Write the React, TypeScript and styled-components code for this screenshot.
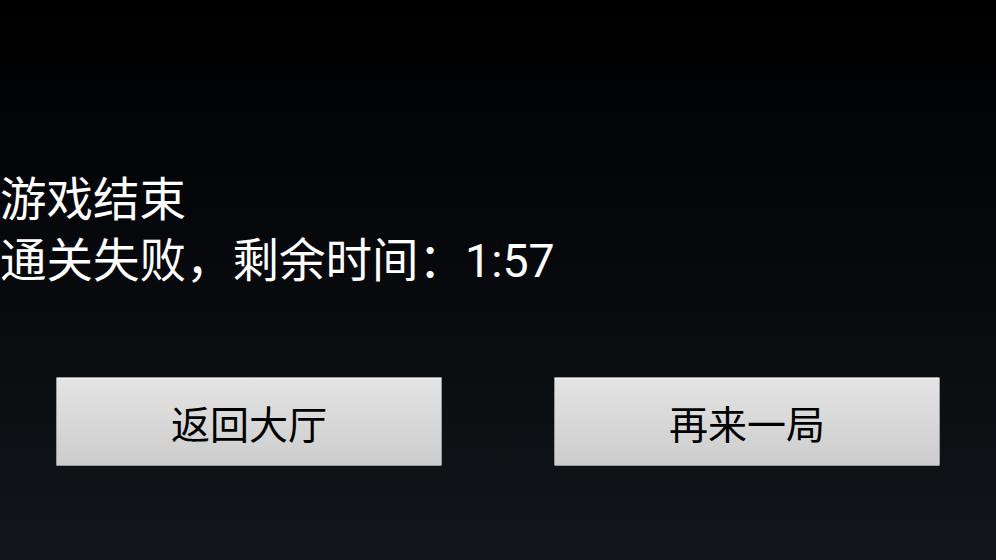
import React from 'react';
import styled, { createGlobalStyle } from 'styled-components';

const GlobalStyle = createGlobalStyle`
  html, body {
    margin : 0;
    padding: 0;
  }
  body {
    font-family: Roboto, 'Noto Sans CJK SC', sans-serif;
  }
`;

const Screen = styled.main`
  width         : 996px;
  height        : 560px;
  background    : linear-gradient(to bottom, #000000 0%, #05070a 40%, #12161a 100%);
  display       : flex;
  flex-direction: column;
  padding-top   : 170px;
  box-sizing    : border-box;
  overflow      : hidden;
`;

const Message = styled.section`
  display       : flex;
  flex-direction: column;
  color         : #ffffff;
  font-size     : 46.5px;
  line-height   : 61px;
`;

const Line = styled.div`
  white-space: nowrap;
`;

const ButtonRow = styled.div`
  display    : flex;
  gap        : 112px;
  margin-top : 85px;
  padding    : 0 56px;
`;

const Button = styled.button`
  width          : 386px;
  height         : 89px;
  padding        : 0;
  border         : 1px solid #9a9a9a;
  border-radius  : 1px;
  background     : linear-gradient(to bottom, #e4e4e4 0%, #d8d8d8 50%, #cdcdcd 100%);
  box-shadow     : inset 0 1px 0 #f0f0f0;
  color          : #000000;
  font-family    : 'Noto Sans CJK SC', sans-serif;
  font-size      : 39px;
  display        : flex;
  align-items    : center;
  justify-content: center;
  cursor         : pointer;
`;

const App = () => {
  return (
    <>
      <GlobalStyle />
      <Screen>
        <Message>
          <Line>游戏结束</Line>
          <Line>通关失败，剩余时间：1:57</Line>
        </Message>
        <ButtonRow>
          <Button>返回大厅</Button>
          <Button>再来一局</Button>
        </ButtonRow>
      </Screen>
    </>
  );
};

export default App;
